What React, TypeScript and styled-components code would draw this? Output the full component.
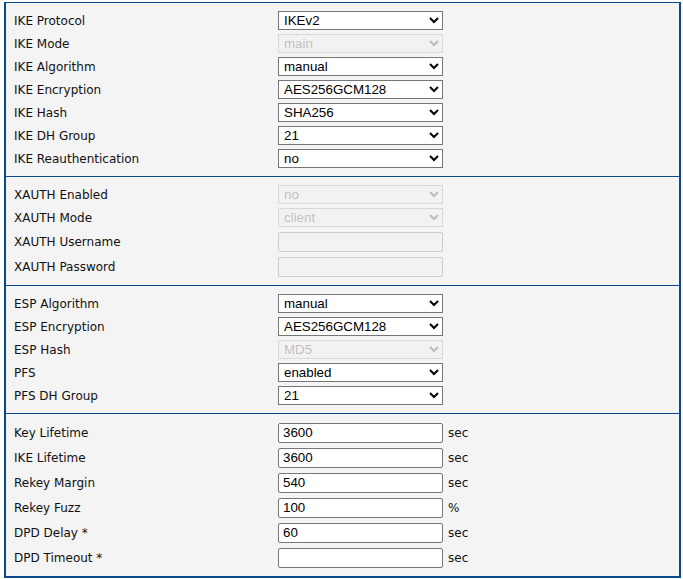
import React from "react";
import styled, { createGlobalStyle } from "styled-components";

const Global = createGlobalStyle`
  html, body { margin: 0; padding: 0; background: #ffffff; }
  body { font-family: "DejaVu Sans", Verdana, sans-serif; }
`;

const Panel = styled.div`
  margin: 2px 0 0 4px;
  width: 677px;
  box-sizing: border-box;
  background: #f4f4f4;
  border-left: 2px solid #0a4a8a;
  border-right: 2px solid #0a4a8a;
  border-top: 1px solid #0a4a8a;
  border-bottom: 2px solid #0a4a8a;
`;

const Section = styled.div`
  padding: 6px 0 6px 8px;
  & + & { border-top: 1px solid #0a4a8a; }
`;

const Row = styled.div<{ $tall?: boolean }>`
  display: grid;
  grid-template-columns: 259px 165px auto;
  column-gap: 5px;
  align-items: center;
  height: ${(p) => (p.$tall ? 25 : 23)}px;
`;

const Label = styled.span`
  font-family: "DejaVu Sans", Verdana, sans-serif;
  font-size: 12px;
  color: #111;
  white-space: nowrap;
`;

const Unit = styled.span`
  font-family: "DejaVu Sans", Verdana, sans-serif;
  font-size: 12px;
  color: #111;
`;

const Select = styled.select`
  box-sizing: border-box;
  width: 165px;
  height: 19px;
  margin: 0;
  font-family: "Liberation Sans", Arial, sans-serif;
  font-size: 13.33px;
  color: #000;
  background-color: #fff;
  border: 1px solid #767676;
  border-radius: 0;
  padding: 0 0 0 1px;
  &:disabled {
    color: rgba(16, 16, 16, 0.35);
    background-color: rgba(239, 239, 239, 0.5);
    border-color: rgba(118, 118, 118, 0.3);
  }
`;

const Input = styled.input`
  box-sizing: border-box;
  width: 165px;
  height: 20px;
  margin: 0;
  font-family: "Liberation Sans", Arial, sans-serif;
  font-size: 13.33px;
  color: #000;
  background: #fff;
  border: 1px solid #767676;
  border-radius: 2px;
  padding: 0 4px;
  &:disabled {
    background-color: rgba(239, 239, 239, 0.5);
    border-color: rgba(118, 118, 118, 0.3);
  }
`;

type Field =
  | { kind: "select"; label: string; value: string; disabled?: boolean }
  | { kind: "input"; label: string; value: string; unit?: string; disabled?: boolean };

const sections: Field[][] = [
  [
    { kind: "select", label: "IKE Protocol", value: "IKEv2" },
    { kind: "select", label: "IKE Mode", value: "main", disabled: true },
    { kind: "select", label: "IKE Algorithm", value: "manual" },
    { kind: "select", label: "IKE Encryption", value: "AES256GCM128" },
    { kind: "select", label: "IKE Hash", value: "SHA256" },
    { kind: "select", label: "IKE DH Group", value: "21" },
    { kind: "select", label: "IKE Reauthentication", value: "no" },
  ],
  [
    { kind: "select", label: "XAUTH Enabled", value: "no", disabled: true },
    { kind: "select", label: "XAUTH Mode", value: "client", disabled: true },
    { kind: "input", label: "XAUTH Username", value: "", disabled: true },
    { kind: "input", label: "XAUTH Password", value: "", disabled: true },
  ],
  [
    { kind: "select", label: "ESP Algorithm", value: "manual" },
    { kind: "select", label: "ESP Encryption", value: "AES256GCM128" },
    { kind: "select", label: "ESP Hash", value: "MD5", disabled: true },
    { kind: "select", label: "PFS", value: "enabled" },
    { kind: "select", label: "PFS DH Group", value: "21" },
  ],
  [
    { kind: "input", label: "Key Lifetime", value: "3600", unit: "sec" },
    { kind: "input", label: "IKE Lifetime", value: "3600", unit: "sec" },
    { kind: "input", label: "Rekey Margin", value: "540", unit: "sec" },
    { kind: "input", label: "Rekey Fuzz", value: "100", unit: "%" },
    { kind: "input", label: "DPD Delay *", value: "60", unit: "sec" },
    { kind: "input", label: "DPD Timeout *", value: "", unit: "sec" },
  ],
];

export default function App() {
  return (
    <>
      <Global />
      <Panel>
        {sections.map((fields, si) => (
          <Section key={si}>
            {fields.map((f) => (
              <Row key={f.label} $tall={f.kind === "input"}>
                <Label>{f.label}</Label>
                {f.kind === "select" ? (
                  <Select defaultValue={f.value} disabled={f.disabled}>
                    <option value={f.value}>{f.value}</option>
                  </Select>
                ) : (
                  <Input
                    type={f.label.includes("Password") ? "password" : "text"}
                    defaultValue={f.value}
                    disabled={f.disabled}
                  />
                )}
                {f.kind === "input" && f.unit ? <Unit>{f.unit}</Unit> : <span />}
              </Row>
            ))}
          </Section>
        ))}
      </Panel>
    </>
  );
}
